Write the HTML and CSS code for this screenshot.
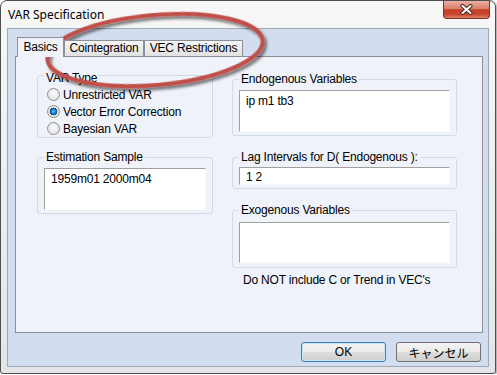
FILE: index.html
```html
<!DOCTYPE html>
<html lang="ja">
<head>
  <meta charset="UTF-8">
  <title>VAR Specification</title>
  <link rel="stylesheet" href="styles.css">
</head>
<body>
  <div class="window">
    <div class="titlebar">
      <span class="title">VAR Specification</span>
      <button class="close">
        <svg width="13" height="11" viewBox="0 0 13 11">
          <path d="M2.5 2 L10.5 9 M10.5 2 L2.5 9" stroke="#4a2a26" stroke-width="4" stroke-linecap="round"/>
          <path d="M2.5 2 L10.5 9 M10.5 2 L2.5 9" stroke="#fff" stroke-width="2" stroke-linecap="round"/>
        </svg>
      </button>
    </div>

    <div class="client">
      <div class="tabs">
        <div class="tab tab-active tab-basics">Basics</div>
        <div class="tab tab-coint">Cointegration</div>
        <div class="tab tab-vec">VEC Restrictions</div>
      </div>

      <div class="page">
        <div class="col col-left">
          <fieldset class="group group-type">
            <legend>VAR Type</legend>
            <label class="radio"><span class="radio-mark"></span>Unrestricted VAR</label>
            <label class="radio"><span class="radio-mark checked"></span>Vector Error Correction</label>
            <label class="radio"><span class="radio-mark"></span>Bayesian VAR</label>
          </fieldset>
          <fieldset class="group group-sample">
            <legend>Estimation Sample</legend>
            <div class="edit edit-tall">1959m01 2000m04</div>
          </fieldset>
        </div>

        <div class="col col-right">
          <fieldset class="group group-endo">
            <legend>Endogenous Variables</legend>
            <div class="edit edit-tall">ip m1 tb3</div>
          </fieldset>
          <fieldset class="group group-lag">
            <legend>Lag Intervals for D( Endogenous ):</legend>
            <div class="edit edit-line">1 2</div>
          </fieldset>
          <fieldset class="group group-exo">
            <legend>Exogenous Variables</legend>
            <div class="edit edit-exo"></div>
          </fieldset>
          <div class="note">Do NOT include C or Trend in VEC's</div>
        </div>
      </div>

      <div class="buttons">
        <button class="btn btn-default">OK</button>
        <button class="btn">キャンセル</button>
      </div>
    </div>

    <!-- annotation drawn over the dialog -->
    <svg class="annot" width="300" height="110" viewBox="0 0 300 110">
      <defs>
        <filter id="shadow" x="-10%" y="-30%" width="125%" height="170%">
          <feDropShadow dx="2" dy="3" stdDeviation="1.8" flood-color="#000" flood-opacity="0.55"/>
        </filter>
      </defs>
      <ellipse cx="155" cy="50" rx="108" ry="35" transform="rotate(-5 155 50)"
               fill="none" stroke="#c1504a" stroke-width="4" filter="url(#shadow)"/>
    </svg>
  </div>
</body>
</html>
```

FILE: styles.css
```css
body {
  margin: 0;
  font-family: "Liberation Sans", "Noto Sans CJK JP", sans-serif;
  font-size: 12px;
  letter-spacing: -0.2px;
  color: #000;
  background: #fff;
}

.window {
  position: relative;
  box-sizing: border-box;
  width: 496px;
  height: 374px;
  padding: 0 6px 6px;
  border: 1px solid #4e4e4e;
  border-radius: 7px 7px 3px 3px;
  background: linear-gradient(#f7f7f7, #e3e5e8);
  box-shadow: 1px 1px 3px rgba(0, 0, 0, 0.45);
  display: flex;
  flex-direction: column;
}

.titlebar {
  height: 27px;
  display: flex;
  align-items: center;
  justify-content: space-between;
}

.title {
  font-family: "Noto Sans", sans-serif;
  font-size: 12px;
  letter-spacing: 0;
  padding-left: 1px;
  color: #000;
}

.close {
  align-self: flex-start;
  box-sizing: border-box;
  width: 47px;
  height: 18px;
  margin-right: -1px;
  padding: 0;
  border: 1px solid #7a3428;
  border-top: none;
  border-radius: 0 0 4px 4px;
  background: linear-gradient(#ebb0a2 0%, #da7f6a 45%, #c53f27 52%, #c8462e 78%, #df8169 100%);
  display: flex;
  align-items: center;
  justify-content: center;
}

.client {
  box-sizing: border-box;
  height: 339px;
  border: 1px solid #a0a9b6;
  background: #d2deef;
  padding: 8px 0 0 7px;
  display: flex;
  flex-direction: column;
}

/* tab strip */
.tabs {
  position: relative;
  z-index: 1;
  display: flex;
  align-items: flex-end;
  height: 19px;
  padding-left: 2px;
}

.tab {
  box-sizing: border-box;
  height: 16px;
  border: 1px solid #8c8f96;
  border-bottom: none;
  background: linear-gradient(#f5f5f5, #e1e1e1);
  line-height: 15px;
  text-align: center;
}

.tab-active {
  height: 20px;
  margin-bottom: -1px;
  line-height: 18px;
  background: #eff3f9;
}

.tab-basics { width: 47px; }
.tab-coint { width: 80px; }
.tab-vec { width: 99px; }

.page {
  box-sizing: border-box;
  width: 468px;
  height: 277px;
  border: 1px solid #8c8f96;
  background: #eff3f9;
  padding: 8px 0 0 21px;
  display: flex;
  gap: 19px;
}

.col {
  display: flex;
  flex-direction: column;
}

.col-left { width: 176px; }
.col-right { width: 225px; margin-top: 7px; }

.group {
  margin: 0;
  padding: 0 6px;
  border: 1px solid #d2dae3;
  border-radius: 3px;
  min-width: 0;
}

.group legend {
  padding: 0 2px;
  line-height: 14px;
}

.group-type { padding: 1px 6px 0; }
.group-type legend { padding-top: 6px; }

.group-sample { margin-top: 12px; padding: 4px 6px 3px; }
.group-endo { padding: 4px 6px 3px; }
.group-lag { margin-top: 14px; padding: 3px 6px 3px; }
.group-exo { margin-top: 14px; padding: 5px 6px 4px; }

.radio {
  display: flex;
  align-items: center;
  gap: 3px;
  height: 17px;
  padding-left: 3px;
}

.radio-mark {
  box-sizing: border-box;
  width: 13px;
  height: 13px;
  border: 1px solid #8d8d8d;
  border-radius: 50%;
  background: radial-gradient(circle at 50% 40%, #fdfdfd, #d9d9d9);
}

.radio-mark.checked {
  background: radial-gradient(circle at 50% 50%, #7fd0ff 0, #2b8bd6 1.6px, #0c4f8a 3.6px, #f3f3f3 4.2px, #dadada 6px);
}

.edit {
  box-sizing: border-box;
  background: #fff;
  border: 1px solid;
  border-color: #a0a0a0 #fbfbfb #fbfbfb #a0a0a0;
  padding: 3px 6px 0;
  line-height: 14px;
  white-space: pre;
}

.edit-tall { height: 42px; }
.edit-line { height: 18px; padding-top: 2px; }
.edit-exo { height: 41px; }

.note {
  margin-top: 5px;
  padding-left: 11px;
  line-height: 14px;
}

.buttons {
  display: flex;
  justify-content: flex-end;
  gap: 10px;
  margin-top: 9px;
  padding-right: 7px;
}

.btn {
  box-sizing: border-box;
  width: 85px;
  height: 20px;
  padding: 0;
  border: 1px solid #707070;
  border-radius: 3px;
  background: linear-gradient(#f3f3f3 0%, #ebebeb 48%, #dddddd 52%, #cfcfcf 100%);
  font: inherit;
  color: #000;
}

.btn-default {
  border-color: #3c7fb1;
  box-shadow: inset 0 0 0 1px #c6e6f9;
}

.annot {
  position: absolute;
  top: -1px;
  left: -1px;
  pointer-events: none;
}
```
